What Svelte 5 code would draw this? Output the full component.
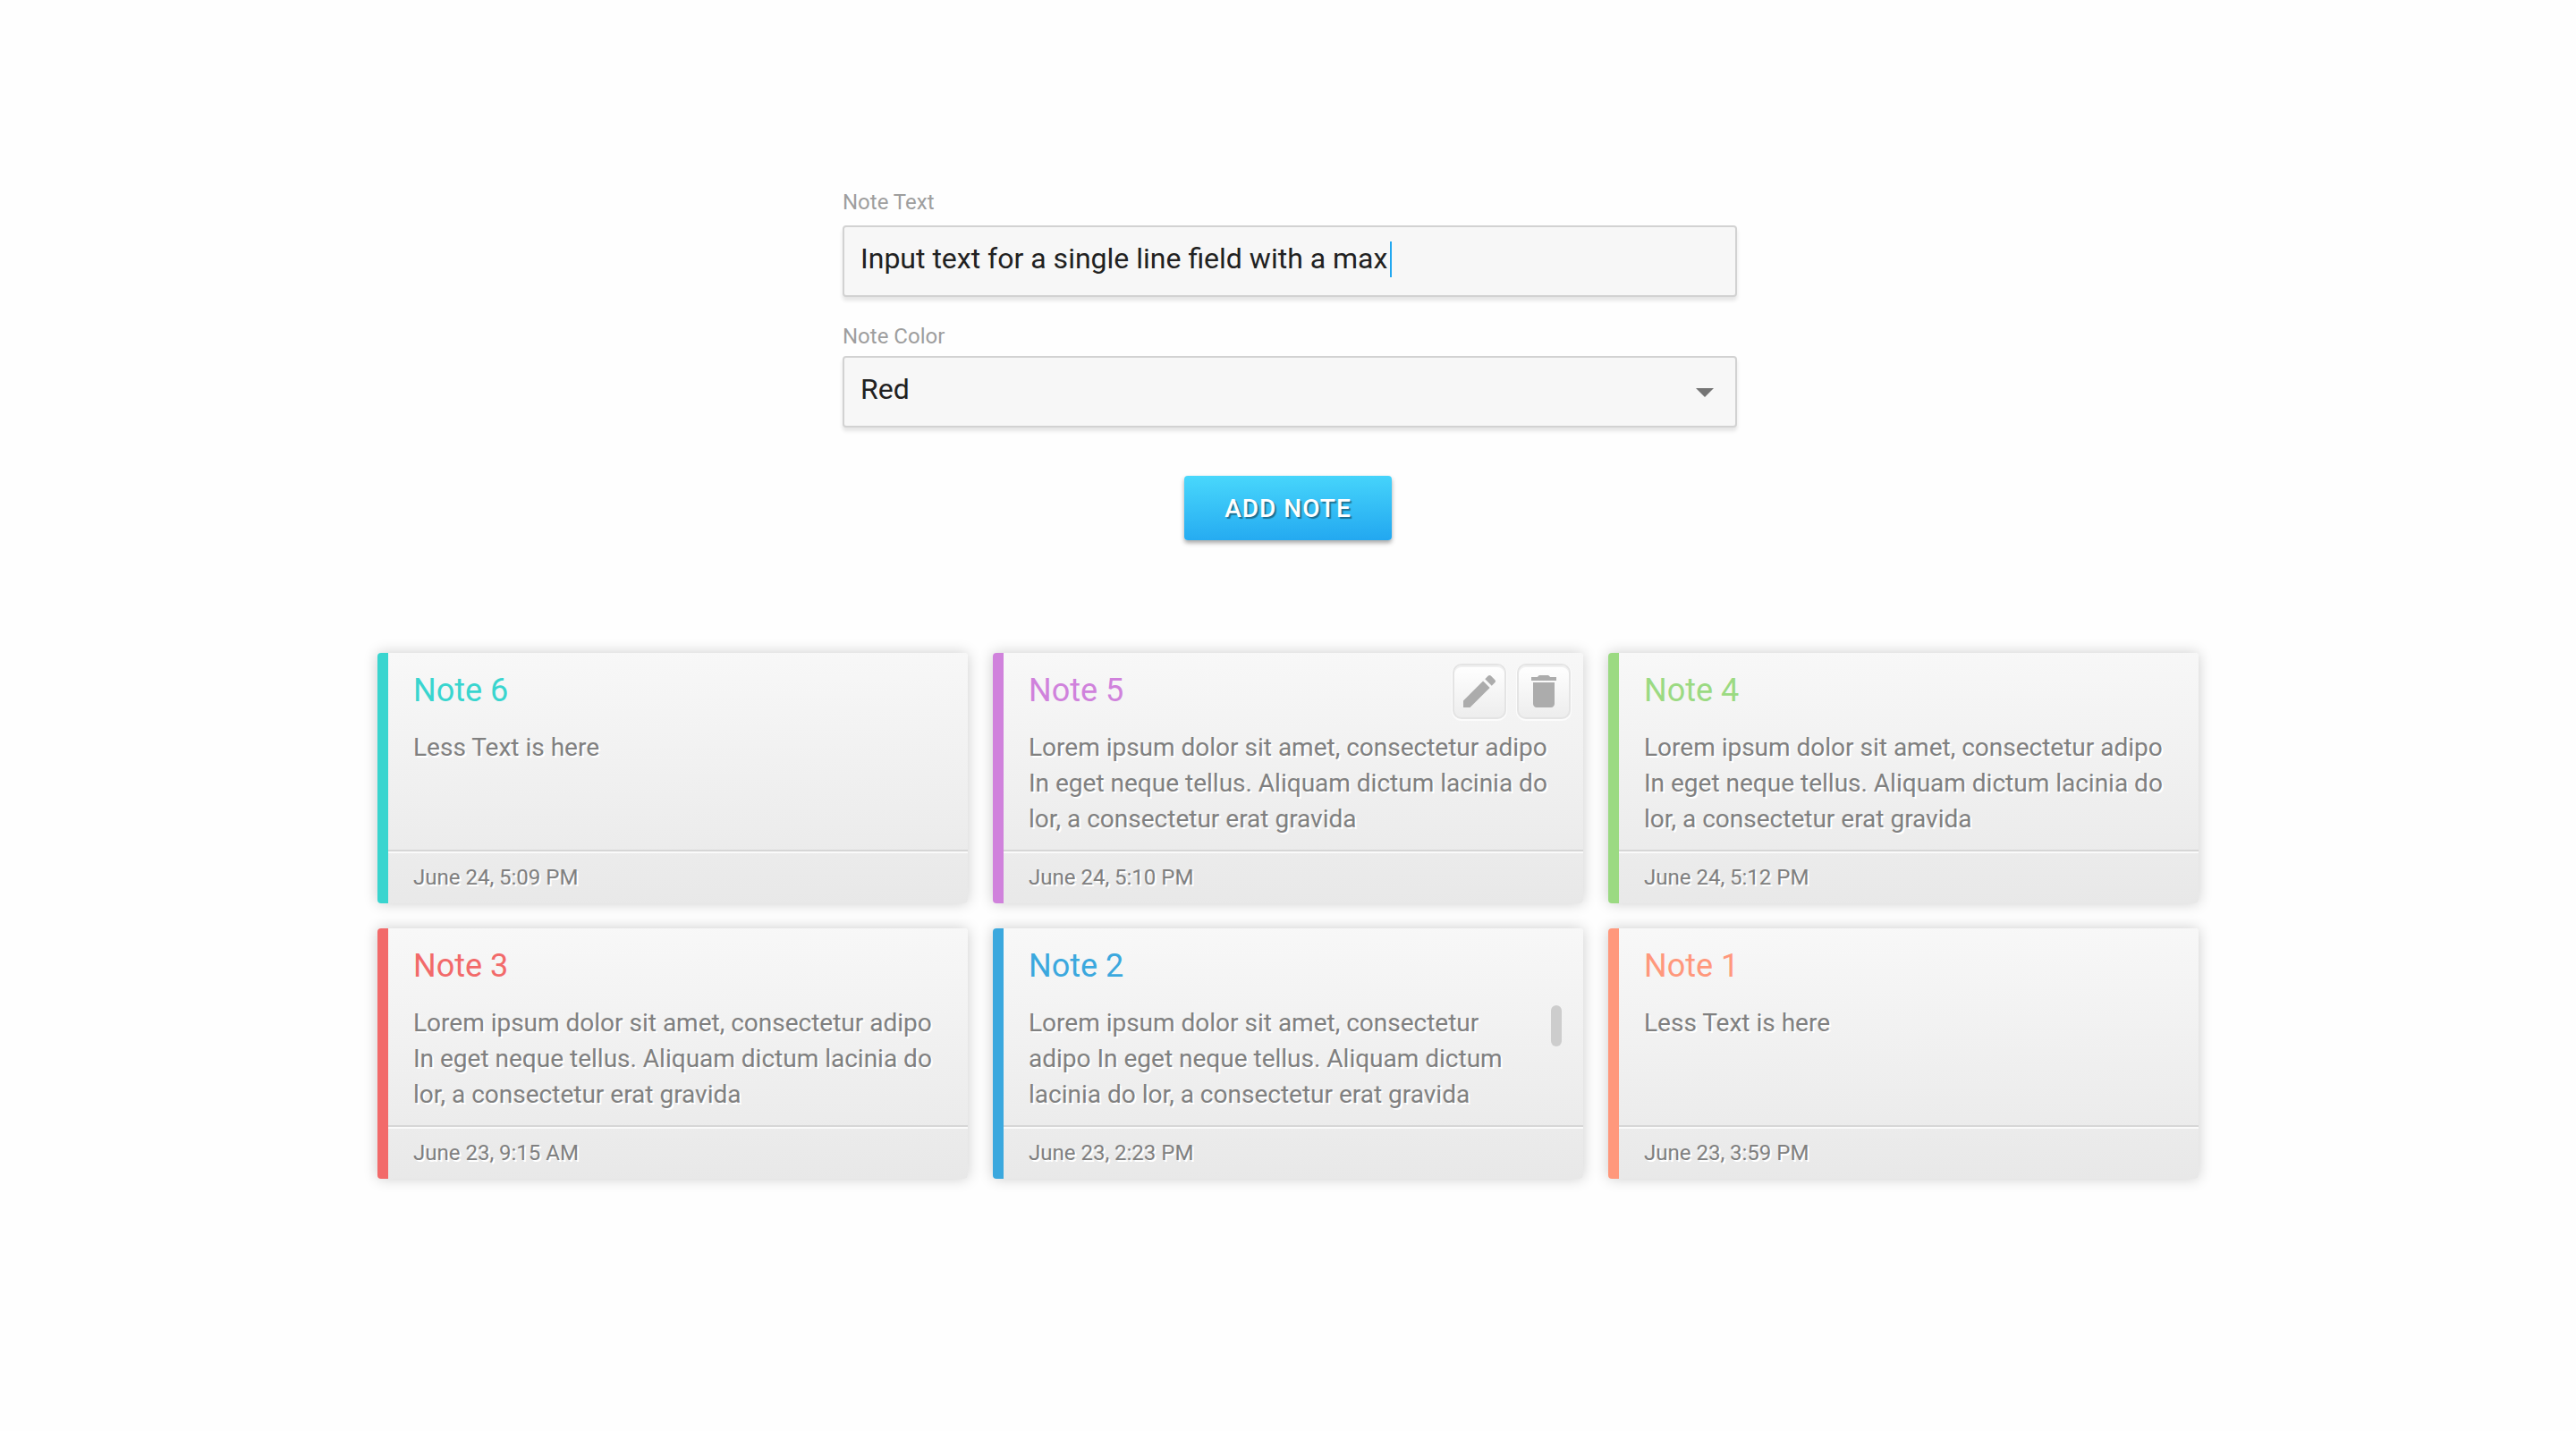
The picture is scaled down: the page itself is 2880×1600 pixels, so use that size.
<script>
  const lorem =
    'Lorem ipsum dolor sit amet, consectetur adipo In eget neque tellus. Aliquam dictum lacinia do lor, a consectetur erat gravida';

  const notes = [
    { id: 6, tone: 'teal', text: 'Less Text is here', date: 'June 24, 5:09 PM' },
    { id: 5, tone: 'purple', text: lorem, date: 'June 24, 5:10 PM', active: true },
    { id: 4, tone: 'green', text: lorem, date: 'June 24, 5:12 PM' },
    { id: 3, tone: 'red', text: lorem, date: 'June 23, 9:15 AM' },
    { id: 2, tone: 'blue', text: lorem, date: 'June 23, 2:23 PM', scroll: true },
    { id: 1, tone: 'coral', text: 'Less Text is here', date: 'June 23, 3:59 PM' }
  ];

  const colors = ['Red', 'Teal', 'Purple', 'Green', 'Blue', 'Coral'];

  let text = $state('Input text for a single line field with a max');
  let color = $state('Red');
</script>

<main class="page">
  <form class="form" onsubmit={(e) => e.preventDefault()}>
    <div class="field text-field">
      <label for="note-text">Note Text</label>
      <div class="control">
        <input id="note-text" type="text" bind:value={text} />
        <span class="caret" aria-hidden="true"></span>
      </div>
    </div>
    <div class="field">
      <label for="note-color">Note Color</label>
      <div class="control">
        <select id="note-color" bind:value={color}>
          {#each colors as c}
            <option>{c}</option>
          {/each}
        </select>
        <svg class="arrow" viewBox="0 0 20 10" aria-hidden="true"><path d="M0 0h20L10 10z" /></svg>
      </div>
    </div>
    <button class="add" type="submit">ADD NOTE</button>
  </form>

  <section class="notes">
    {#each notes as note (note.id)}
      <article class="note {note.tone}">
        <div class="content">
          <header>
            <h2>Note {note.id}</h2>
            {#if note.active}
              <div class="actions">
                <button type="button" aria-label="Edit note">
                  <svg viewBox="0 0 24 24"><path d="M3 17.250V21h3.750L17.810 9.940l-3.750-3.750L3 17.250zM20.710 7.040c.39-.39.39-1.020 0-1.410l-2.340-2.340c-.39-.39-1.020-.39-1.410 0l-1.830 1.830 3.750 3.750 1.830-1.830z" /></svg>
                </button>
                <button type="button" aria-label="Delete note">
                  <svg viewBox="0 0 24 24"><path d="M6 19c0 1.100.9 2 2 2h8c1.100 0 2-.9 2-2V7H6v12zM19 4h-3.500c-.4-.7-.8-1-1.500-1h-4c-.7 0-1.100.3-1.500 1H5v2h14V4z" /></svg>
                </button>
              </div>
            {/if}
          </header>
          <div class="body">
            <p>{note.text}</p>
            {#if note.scroll}
              <span class="thumb"></span>
            {/if}
          </div>
        </div>
        <footer><time>{note.date}</time></footer>
      </article>
    {/each}
  </section>
</main>

<style>
  :global(body) {
    background: #fefefe;
    font-family: Roboto, 'Liberation Sans', sans-serif;
  }

  .page {
    display: flex;
    flex-direction: column;
    align-items: center;
    gap: 126px;
    padding: 208px 24px;
  }

  .form {
    display: flex;
    flex-direction: column;
    align-items: center;
    width: 100%;
    max-width: 1004px;
  }

  .field {
    align-self: stretch;
    margin: 0 0 26px 4px;
  }

  label {
    display: block;
    margin-bottom: 4px;
    font-size: 24px;
    line-height: 36px;
    color: #9e9e9e;
  }

  .text-field label {
    margin-bottom: 8px;
  }

  .control {
    position: relative;
  }

  input,
  select {
    box-sizing: border-box;
    display: block;
    width: 100%;
    height: 80px;
    margin: 0;
    padding: 0 18px 6px;
    border: 2px solid #d2d2d2;
    border-radius: 4px;
    outline: none;
    appearance: none;
    background: #f7f7f7;
    box-shadow: 0 4px 4px rgba(0, 0, 0, 0.1);
    color: #212121;
    font-family: inherit;
    font-size: 32px;
  }

  .caret {
    position: absolute;
    top: 18px;
    left: 612px;
    width: 2px;
    height: 40px;
    background: #22a8f0;
  }

  .arrow {
    position: absolute;
    top: 36px;
    right: 26px;
    width: 20px;
    height: 10px;
    fill: #757575;
  }

  .add {
    width: 232px;
    height: 72px;
    margin-top: 28px;
    padding: 0;
    border: 0;
    border-radius: 4px;
    background: linear-gradient(178deg, #49d8fc, #22a7f0);
    box-shadow: 0 3px 5px rgba(0, 0, 0, 0.35);
    color: #fff;
    font-family: inherit;
    font-size: 28px;
    font-weight: 500;
    letter-spacing: 1px;
    text-shadow: 2px 2px 1px rgba(0, 0, 0, 0.4);
  }

  .notes {
    display: grid;
    grid-template-columns: repeat(3, minmax(0, 1fr));
    gap: 28px;
    width: 100%;
    max-width: 2036px;
  }

  .note {
    display: flex;
    flex-direction: column;
    border-left: 12px solid var(--tone);
    border-radius: 4px;
    background: linear-gradient(179deg, #f8f8f8, #e8e8e8);
    box-shadow: 0 0 16px rgba(0, 0, 0, 0.2);
  }

  .teal { --tone: #39d5cf; }
  .purple { --tone: #d082dc; }
  .green { --tone: #9bda82; }
  .red { --tone: #f26a6a; }
  .blue { --tone: #3ba8de; }
  .coral { --tone: #ff987c; }

  .content {
    flex: 1;
    padding: 12px 14px 14px 28px;
  }

  header {
    display: flex;
    justify-content: space-between;
    height: 74px;
  }

  h2 {
    margin: 0;
    color: var(--tone);
    font-size: 36px;
    font-weight: 400;
    line-height: 60px;
  }

  .actions {
    display: flex;
    gap: 12px;
  }

  .actions button {
    display: grid;
    place-items: center;
    box-sizing: border-box;
    width: 60px;
    height: 62px;
    padding: 0;
    border: 2px solid #e4e4e4;
    border-radius: 10px;
    background: linear-gradient(#fff, #ededed);
    box-shadow: 0 1px 0 1px #fcfcfc, inset 0 2px 0 #f0f0f0;
  }

  .actions svg {
    width: 48px;
    height: 48px;
    fill: #acacac;
  }

  .body {
    display: flex;
    justify-content: space-between;
    min-height: 120px;
  }

  p {
    margin: 0;
    color: #808080;
    font-size: 28px;
    line-height: 40px;
    text-shadow: 2px 2px 0 #fff;
  }

  .thumb {
    flex: none;
    width: 12px;
    height: 46px;
    margin: 0 10px 0 24px;
    border-radius: 6px;
    background: #cdcdcd;
  }

  footer {
    padding: 8px 28px;
    border-top: 2px solid #d6d6d6;
    box-shadow: inset 0 2px 0 #fafafa;
    color: #808080;
    font-size: 24px;
    line-height: 42px;
    text-shadow: 2px 2px 0 #fff;
  }
</style>
